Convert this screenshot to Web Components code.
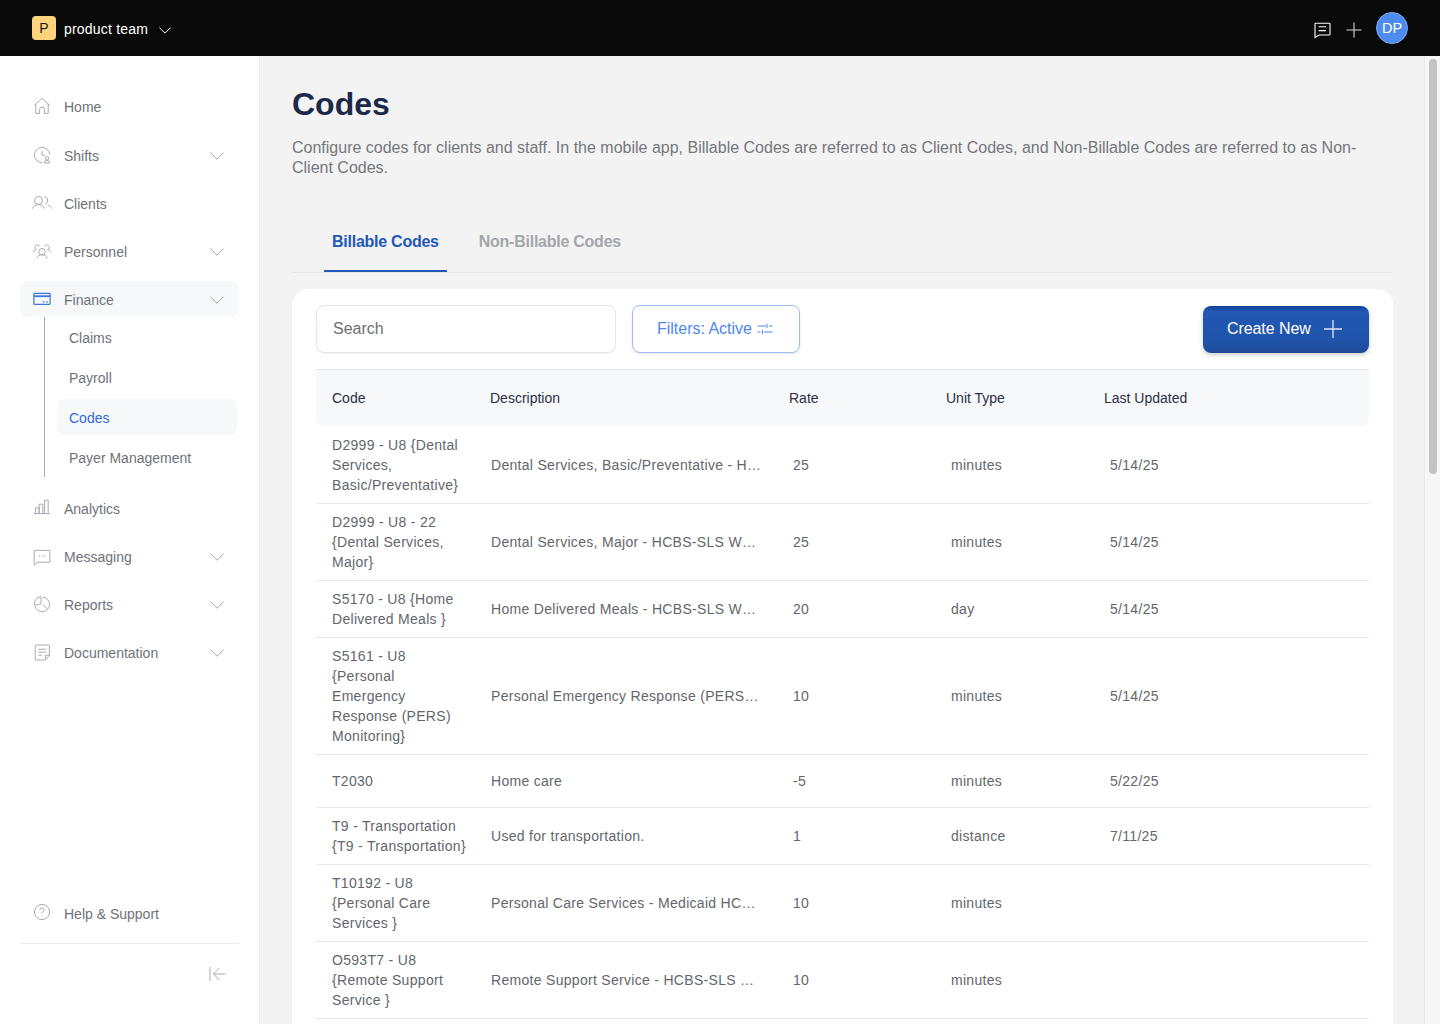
<!DOCTYPE html>
<html lang="en"><head><meta charset="utf-8"><title>Codes</title>
<style>
html,body{margin:0;padding:0;height:100%;overflow:hidden;background:#f3f3f3}
body{font-family:"Liberation Sans",Arial,sans-serif;font-size:14px;color:#1f2937}
</style></head><body>
<app-shell></app-shell>
<script>
const ICONS={
home:'<path d="M1.2 8.4 9 1.5l7.8 6.9"/><path d="M2.8 7.2v9.2h3.7v-3.8a2.5 2.5 0 0 1 5 0v3.8h3.7V7.2"/>',
shifts:'<path d="M9.4 16.6A7.6 7.6 0 1 1 16.6 8.6"/><path d="M9 5v4.2h3"/><circle cx="14" cy="12.2" r="1.7"/><path d="M11.2 17c0-1.7 1.2-2.5 2.8-2.5s2.8.8 2.8 2.5z"/>',
clients:'<circle cx="5.5" cy="6.4" r="4"/><path d="M-.6 14.6C.5 12 3 10.6 5.5 10.6s5 1.4 6.1 4"/><path d="M11.2 2.6a4 4 0 0 1 1 7.7"/><path d="M14.8 10.8c1.7.6 3.2 2 4 3.8"/>',
personnel:'<circle cx="9" cy="9.7" r="3.2"/><path d="M3.8 16.4c.6-2.6 2.6-3.6 5.2-3.6s4.6 1 5.2 3.6"/><path d="M6.4 4.6a2.4 2.4 0 1 0-3 3"/><path d="M.1 10.4c.5-1.6 1.6-2.6 3.3-2.8"/><path d="M11.6 4.6a2.4 2.4 0 1 1 3 3"/><path d="M17.9 10.4c-.5-1.6-1.6-2.6-3.3-2.8"/>',
finance:'<rect x=".9" y="3.4" width="16.2" height="11" rx=".6" stroke-width="1.2"/><path d="M.9 6.2h16.2" stroke-width="1.8"/><path d="M9.6 12h2M13 12h2"/>',
analytics:'<path d="M.8 14.6h16"/><path d="M2.6 14.6V8.8h3.6v5.8"/><path d="M6.2 14.6V5.2h3.6v9.4"/><path d="M11.6 14.6V1.2h3.6v13.4"/>',
messaging:'<path d="M1.2 3.4h15.2a.4.4 0 0 1 .4.4v11a.4.4 0 0 1-.4.4H5l-3.8 3V3.4z"/><path d="M6 9.2h1M8.6 9.2h1M11.2 9.2h1" stroke-width="1.2"/>',
reports:'<path d="M10 2a7.4 7.4 0 1 1-8 9"/><path d="M8 1.8v7l-6.4 1.4A6.7 6.7 0 0 1 8 1.8z"/><path d="M9.8 9.6 14.6 14"/>',
docs:'<path d="M2.2 17V2.6a.6.6 0 0 1 .6-.6h13a.6.6 0 0 1 .6.6v9.6L12.4 17H2.8z"/><path d="M12.4 16.8v-4.6h4.8"/><path d="M5.2 6.2h8.2M5.2 9.2h8.2M5.2 12.2h3.6"/>',
help:'<circle cx="9" cy="8" r="7.6"/><path d="M6.9 6a2.1 2.1 0 1 1 3.2 1.8c-.7.4-1.1.9-1.1 1.7"/><path d="M9 11.4v.8"/>'
};
const icon=(n,c)=>`<svg width="18" height="18" viewBox="0 0 18 18" fill="none" stroke="${c||'#a8abb0'}" stroke-width="1">${ICONS[n]}</svg>`;
const CHEV='<svg width="14" height="8" viewBox="0 0 14 8" fill="none" stroke="#a3a6ab" stroke-width="1"><path d="M.4.6 7 7.2 13.6.6"/></svg>';

class NavItem extends HTMLElement{
  connectedCallback(){
    const r=this.shadowRoot||this.attachShadow({mode:'open'});
    const ic=this.getAttribute('icon');const active=this.hasAttribute('active');
    r.innerHTML=`<style>
:host{display:flex;align-items:center;height:36px;padding:0 15px 0 12px;margin-bottom:12px;border-radius:8px;color:#6f7279;font-size:14px}
:host([active]){background:#f7f8fa}
.i{width:18px;height:18px;margin:0 13px 0 1px;display:block;flex:none}
.t{flex:1;padding-top:2px}
.c{display:flex;padding-top:2px}
svg{display:block;overflow:visible}
</style><span class="i">${icon(ic,active?'#3f76db':'')}</span><span class="t"><slot></slot></span>${this.hasAttribute('expand')?`<span class="c">${CHEV}</span>`:''}`;
  }
}
customElements.define('nav-item',NavItem);

class SubItem extends HTMLElement{
  connectedCallback(){
    const r=this.shadowRoot||this.attachShadow({mode:'open'});
    r.innerHTML=`<style>
:host{display:flex;align-items:center;box-sizing:border-box;height:36px;padding:2px 12px 0;margin-bottom:4px;border-radius:8px;color:#6f7279;font-size:14px}
:host([active]){background:#f7f8fa;color:#2f6bd8}
</style><slot></slot>`;
  }
}
customElements.define('sub-item',SubItem);

class SideNav extends HTMLElement{
  connectedCallback(){
    const r=this.attachShadow({mode:'open'});
    r.innerHTML=`<style>
:host{display:flex;flex-direction:column;width:260px;flex:none;box-sizing:border-box;background:#fff;padding:32px 20px 0;border-right:1px solid #ececec;height:100%}
.sub{margin:-12px 2px 13px 24px;padding:2px 0 0 12px;border-left:1px solid #a9abaf;height:158px}
.sub sub-item:last-child{margin-bottom:0}
.grow{flex:1}
.foot{border-top:1px solid #ececec;height:81px;display:flex;justify-content:flex-end;padding:21px 12px 0 0;box-sizing:border-box}
.foot svg{display:block}
</style>
<nav-item icon="home" style="margin-bottom:13px">Home</nav-item>
<nav-item icon="shifts" expand>Shifts</nav-item>
<nav-item icon="clients">Clients</nav-item>
<nav-item icon="personnel" expand>Personnel</nav-item>
<nav-item icon="finance" expand active>Finance</nav-item>
<div class="sub"><sub-item>Claims</sub-item><sub-item>Payroll</sub-item><sub-item active>Codes</sub-item><sub-item>Payer Management</sub-item></div>
<nav-item icon="analytics">Analytics</nav-item>
<nav-item icon="messaging" expand>Messaging</nav-item>
<nav-item icon="reports" expand>Reports</nav-item>
<nav-item icon="docs" expand>Documentation</nav-item>
<div class="grow"></div>
<nav-item icon="help">Help &amp; Support</nav-item>
<div class="foot"><svg width="18" height="18" viewBox="0 0 18 18" fill="none" stroke="#a8abb0" stroke-width="1"><path d="M1 2v14"/><path d="M16.5 9H4.5"/><path d="M10.5 3 4.5 9l6 6"/></svg></div>`;
  }
}
customElements.define('side-nav',SideNav);

class TopBar extends HTMLElement{
  connectedCallback(){
    const r=this.attachShadow({mode:'open'});
    r.innerHTML=`<style>
:host{display:flex;align-items:center;height:56px;flex:none;background:#0a0a0a;padding:0 32px;color:#fff;font-size:14px}
.logo{width:24px;height:24px;border-radius:4px;background:#fdd47c;color:#1a1a1a;display:flex;align-items:center;justify-content:center;margin-right:8px;font-size:14px}
.team{margin-right:11px;letter-spacing:.2px;padding-top:2px}
.sp{flex:1}
svg{display:block;overflow:visible}
.chev{margin-top:4px}
.av{width:32px;height:32px;border-radius:50%;background:#4d8bef;box-sizing:border-box;border:1px solid #7ba6f0;display:flex;align-items:center;justify-content:center;font-size:14.5px;margin-left:14px;color:#fff}
.msg{margin-right:14px}
.plus{margin-top:3px}
</style>
<span class="logo">P</span><span class="team">product team</span>
<svg class="chev" width="12" height="7" viewBox="0 0 12 7" fill="none" stroke="#fff" stroke-width="1"><path d="M.4.6 6 6.2 11.6.6"/></svg>
<span class="sp"></span>
<svg class="msg" width="18" height="18" viewBox="0 0 18 18" fill="none" stroke="#fff" stroke-width="1.1"><path d="M1 5a.8.8 0 0 1 .8-.8h13.4a.8.8 0 0 1 .8.8v10.2a.8.8 0 0 1-.8.8H5l-4 2.6z"/><path d="M4.6 7.8h7.4M4.6 11.6h7.4"/></svg>
<svg class="plus" width="16" height="16" viewBox="0 0 16 16" fill="none" stroke="#d8d8d8" stroke-width="1.1"><path d="M8 .5v15M.5 8h15"/></svg>
<span class="av">DP</span>`;
  }
}
customElements.define('top-bar',TopBar);

class TabBar extends HTMLElement{
  connectedCallback(){
    const r=this.attachShadow({mode:'open'});
    r.innerHTML=`<style>
:host{display:flex;border-bottom:1px solid #e5e7eb;height:56px;padding-left:32px;font-size:16px;font-weight:700;letter-spacing:-.25px}
.t{padding:0 8px 4px;height:56px;box-sizing:border-box;display:flex;align-items:center;margin-right:32px;color:#a4a6aa}
.t.off{padding:0 0 4px}
.on{color:#2358b8;box-shadow:inset 0 -2px 0 #2358b8}
</style><span class="t on">Billable Codes</span><span class="t off">Non-Billable Codes</span>`;
  }
}
customElements.define('tab-bar',TabBar);

class CodesTable extends HTMLElement{
  connectedCallback(){
    const r=this.attachShadow({mode:'open'});
    const rows=[
['D2999 - U8 {Dental Services, Basic/Preventative}','Dental Services, Basic/Preventative - H…','25','minutes','5/14/25',78],
['D2999 - U8 - 22 {Dental Services, Major}','Dental Services, Major - HCBS-SLS W…','25','minutes','5/14/25',77],
['S5170 - U8 {Home Delivered Meals }','Home Delivered Meals - HCBS-SLS W…','20','day','5/14/25',57],
['S5161 - U8 {Personal Emergency Response (PERS) Monitoring}','Personal Emergency Response (PERS…','10','minutes','5/14/25',117],
['T2030','Home care','-5','minutes','5/22/25',53],
['T9 - Transportation {T9 - Transportation}','Used for transportation.','1','distance','7/11/25',57],
['T10192 - U8 {Personal Care Services }','Personal Care Services - Medicaid HC…','10','minutes','',77],
['O593T7 - U8 {Remote Support Service }','Remote Support Service - HCBS-SLS …','10','minutes','',77]];
    r.innerHTML=`<style>
:host{display:block;font-size:14px}
.g{display:grid;grid-template-columns:174px 299px 157px 158px 265px}
.h{height:57px;background:#f7f8fa;border-top:1px solid #e5e7eb;border-radius:0 0 8px 8px;color:#2b3044;align-items:center;box-sizing:border-box}
.h span:first-child{padding-left:16px}
.r{border-bottom:1px solid #e5e7eb;align-items:center;color:#63666b;letter-spacing:.3px;line-height:20px;box-sizing:border-box}
.code{padding:0 20px 0 16px}
.d{white-space:nowrap;padding-left:1px}
.rate{padding-left:4px}
.unit{padding-left:5px}
.date{padding-left:6px}
</style>
<div class="g h"><span>Code</span><span>Description</span><span>Rate</span><span>Unit Type</span><span>Last Updated</span></div>
${rows.map(x=>`<div class="g r" style="height:${x[5]}px"><div class="code">${x[0]}</div><div class="d">${x[1]}</div><div class="rate">${x[2]}</div><div class="unit">${x[3]}</div><div class="date">${x[4]}</div></div>`).join('')}`;
  }
}
customElements.define('codes-table',CodesTable);

class CodesCard extends HTMLElement{
  connectedCallback(){
    const r=this.attachShadow({mode:'open'});
    r.innerHTML=`<style>
:host{display:block;background:#fff;border-radius:16px 16px 0 0;margin-top:16px;padding:16px 24px 40px}
.bar{display:flex;align-items:center;height:48px;margin-bottom:16px}
.search{width:300px;height:48px;box-sizing:border-box;border:1px solid #e3e4e7;border-radius:8px;padding:0 16px;display:flex;align-items:center;color:#6f6f6f;font-size:16px;box-shadow:0 1px 2px rgba(0,0,0,.04)}
.filter{width:168px;height:48px;box-sizing:border-box;margin-left:16px;border:1px solid #9dbdf5;border-radius:8px;display:flex;align-items:center;padding-left:24px;color:#4d87ee;font-size:16px;letter-spacing:-.02px;gap:5px;box-shadow:0 1px 3px rgba(0,0,0,.1)}
.sp{flex:1}
.create{width:166px;height:47px;box-sizing:border-box;padding-left:24px;border-radius:8px;background:linear-gradient(#0f429b 0,#2258b3 12%,#2054ab 70%,#1d4a98 100%);color:#fff;font-size:16px;letter-spacing:-.08px;display:flex;align-items:center;gap:13px;box-shadow:0 2px 5px rgba(0,0,0,.2)}
svg{display:block}
</style>
<div class="bar"><div class="search">Search</div><div class="filter">Filters: Active
<svg width="16" height="14" viewBox="0 0 16 14" fill="none" stroke="#4d87ee" stroke-width="1"><path d="M.5 4h8.5M12 4h3.5M10 1.8v4.4M.5 10h3M7 10h8.5M5.5 7.8v4.4"/></svg></div><span class="sp"></span>
<div class="create">Create New<svg width="18" height="18" viewBox="0 0 18 18" fill="none" stroke="#dfe7f5" stroke-width="1.3"><path d="M9 0v18M0 9h18"/></svg></div></div>
<codes-table></codes-table>`;
  }
}
customElements.define('codes-card',CodesCard);

class AppShell extends HTMLElement{
  connectedCallback(){
    const r=this.attachShadow({mode:'open'});
    r.innerHTML=`<style>
:host{display:flex;flex-direction:column;height:1024px;overflow:hidden}
.body{display:flex;flex:1;min-height:0}
main{flex:1;min-width:0;box-sizing:border-box;padding:28px 31px 0 32px;background:#f3f3f3;overflow:hidden}
h1{margin:0;font-size:32px;line-height:40px;font-weight:700;color:#1c2a4a}
p{margin:14px 0 38px;font-size:16px;line-height:20px;color:#75777c}
.scroll{width:16px;flex:none;background:#f6f6f6;border-left:1px solid #e8e8e8;box-sizing:border-box;padding:3px 3px 0 4px}
.thumb{height:415px;border-radius:4px;background:#c3c3c3}
</style>
<top-bar></top-bar>
<div class="body"><side-nav></side-nav>
<main><h1>Codes</h1><p>Configure codes for clients and staff. In the mobile app, Billable Codes are referred to as Client Codes, and Non-Billable Codes are referred to as Non-Client Codes.</p><tab-bar></tab-bar><codes-card></codes-card></main>
<div class="scroll"><div class="thumb"></div></div></div>`;
  }
}
customElements.define('app-shell',AppShell);
</script></body></html>
